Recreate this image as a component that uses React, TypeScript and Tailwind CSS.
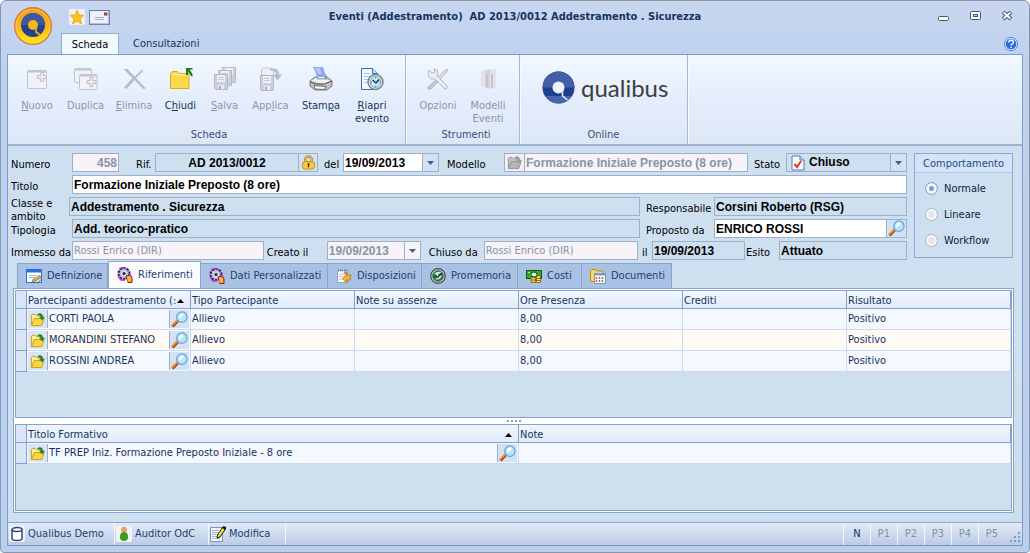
import React, { useState } from 'react'
import clsx from 'clsx'

interface IconProps {
  muted?: boolean
}

const inputBase = 'h-[19px] min-w-0 border border-[#9db0cb] px-px outline-none'
const boldText = "font-['Liberation_Sans',sans-serif] text-[12px] font-bold"
const readOnlyField = 'bg-[#cedff0] text-black'
const disabledField = 'bg-[#f7f3f8] text-[#8795a3]'

/* ---------- Icons ---------- */

const Orb = () => (
  <svg viewBox="0 0 38 38" className="h-[38px] w-[38px]">
    <defs>
      <linearGradient id="orb" x1="0" y1="0" x2="0" y2="1">
        <stop offset="0" stopColor="#f39a1c" />
        <stop offset="0.55" stopColor="#fbb913" />
        <stop offset="1" stopColor="#ffe81e" />
      </linearGradient>
    </defs>
    <circle cx="19" cy="19" r="18.4" fill="url(#orb)" stroke="#d9773c" strokeWidth="1.2" />
    <circle cx="19" cy="19" r="16.6" fill="none" stroke="#ffd75a" strokeWidth="0.8" />
    <circle cx="19" cy="18" r="12" fill="#24408f" />
    <path d="M7 18a12 12 0 0 1 24 0z" fill="#3c5aa4" />
    <circle cx="19" cy="18" r="5" fill="#fbb714" />
    <path d="M22 20v5l4 3" fill="none" stroke="#fbb714" strokeWidth="1.6" />
  </svg>
)

const StarIcon = () => (
  <svg viewBox="0 0 16 16" className="h-4 w-4">
    <rect width="16" height="16" rx="2" fill="#f3f1f1" />
    <path d="M8 1l2 4.900 5 .4-3.800 3.400L12.500 15 8 12.100 3.500 15l1.300-5.300L1 6.300l5-.4z" fill="#fcc419" stroke="#e59a10" strokeWidth="0.7" />
  </svg>
)

const MailIcon = () => (
  <svg viewBox="0 0 21 15" className="h-[15px] w-[21px]">
    <rect x="0.5" y="0.5" width="20" height="14" fill="#eef0fb" stroke="#6379b8" />
    <path d="M1 14h19V1" fill="none" stroke="#8190b8" />
    <path d="M6 7.500h9M6 9.500h9" stroke="#a9afc0" />
    <rect x="15" y="2.5" width="3.5" height="3" fill="#a0443c" />
  </svg>
)

const NewIcon = () => (
  <svg viewBox="0 0 24 24" className="h-6 w-6">
    <rect x="2.5" y="3.5" width="19" height="18" rx="1" fill="#f1f1f9" stroke="#c3c4d1" />
    <path d="M3 4.500h18" stroke="#c4c5d2" strokeWidth="2" />
    <path d="M15.500 5.500h3v3h3v3h-3v3h-3v-3h-3v-3h3z" fill="#e9eaf2" stroke="#bdbecc" />
  </svg>
)

const DuplicateIcon = () => (
  <svg viewBox="0 0 24 24" className="h-6 w-6">
    <rect x="0.5" y="1.5" width="17" height="14" rx="1" fill="#f1f1f9" stroke="#c3c4d1" />
    <path d="M1 2.500h16" stroke="#c4c5d2" strokeWidth="2" />
    <rect x="5.5" y="7.5" width="17.5" height="15" rx="1" fill="#f1f1f9" stroke="#c3c4d1" />
    <path d="M6 8.500h17" stroke="#c4c5d2" strokeWidth="2" />
    <path d="M16 10.500h3v3h3v3h-3v3h-3v-3h-3v-3h3z" fill="#e9eaf2" stroke="#bdbecc" />
  </svg>
)

const DeleteIcon = () => (
  <svg viewBox="0 0 24 24" className="h-6 w-6">
    <path d="M1.500 2l4 0 7 7.500L20 3l1.500 .5-7.500 7.500L23.500 21l-1.500 1.500-9.500-9.500-8 9-2.500-1.500 8.500-9.500z" fill="#b9bac7" />
  </svg>
)

const CloseFolderIcon = () => (
  <svg viewBox="0 0 24 24" className="h-6 w-6">
    <path d="M1.500 6.500l2-2h5l2 2h9.500v15h-18.500z" fill="#fbd94e" stroke="#d8a81c" />
    <path d="M2.500 7.500h16.500" stroke="#fff3a5" />
    <path d="M17 1h6.500v1.500h-3l3 4.500v2.500h-1l-3.500-5V8H17z" fill="#1c7d20" />
  </svg>
)

const Floppy = ({ x, y }: { x: number; y: number }) => (
  <g transform={`translate(${x} ${y})`}>
    <path d="M.5.5h13v15h-12l-1-1z" fill="#cdced9" stroke="#b7b8c6" />
    <rect x="3" y="1" width="8" height="7" fill="#efeff7" />
    <path d="M4 3.500h6M4 5.500h6" stroke="#c5c6d2" />
    <rect x="4" y="11" width="6" height="4" fill="#e9e9f2" />
    <rect x="5" y="12" width="2" height="3" fill="#a9aaba" />
  </g>
)

const SaveIcon = () => (
  <svg viewBox="0 0 24 24" className="h-6 w-6">
    <Floppy x={9} y={0} />
    <Floppy x={5} y={3} />
    <Floppy x={1} y={7} />
  </svg>
)

const ApplyIcon = () => (
  <svg viewBox="0 0 24 24" className="h-6 w-6">
    <path d="M2.500 8V3l2-2h8l2 3v5z" fill="#efeff7" stroke="#c3c4d0" />
    <Floppy x={1} y={8} />
    <path d="M11 1.500h5q4 1 4 6h3l-4.500 6-4.500-6h3q0-4-6-4z" fill="#bbbcc9" />
  </svg>
)

const PrintIcon = () => (
  <svg viewBox="0 0 24 24" className="h-6 w-6">
    <path d="M4 0h10q1 5 4 10H8Q7 5 4 0z" fill="#8fa5f2" />
    <path d="M6 1h5l2 6H9z" fill="#b9c6f8" />
    <path d="M1 14l5-4h2l1 2h8l-1-2h2l5 4v5l-5 4H6l-5-4z" fill="#bfc1c5" stroke="#75787c" />
    <path d="M2 14l5-3.500 2 2h8l5 1.500-7 3z" fill="#f2f2f2" />
    <path d="M5 18.500l12 1-2 3-9-.5z" fill="#fafafa" stroke="#6c6e72" />
    <path d="M1 15l6 2h8l8-3" fill="none" stroke="#484b50" />
  </svg>
)

const ReopenIcon = () => (
  <svg viewBox="0 0 24 24" className="h-6 w-6">
    <path d="M1.500 1.500h11l5 5v16h-16z" fill="#f5f9ff" stroke="#2a70cd" />
    <path d="M12.500 1.500v5h5" fill="#cfe1fa" stroke="#2a70cd" />
    <path d="M4 6.500h6M4 9.500h7M4 12.500h4M4 15.500h3" stroke="#9ec3f3" />
    <circle cx="15.500" cy="15" r="7.500" fill="#d9e2eb" stroke="#7b8794" strokeWidth="1.5" />
    <circle cx="15.500" cy="15" r="5.300" fill="#c4ebfb" stroke="#78aed2" />
    <path d="M12.500 13l3.500 3 3-3.500" fill="none" stroke="#17365f" strokeWidth="1.5" />
    <path d="M15 10.500h1M15 19.500h1M11 15.500h1M19.500 15.500h1" stroke="#e8612c" strokeWidth="1.5" />
  </svg>
)

const OptionsIcon = () => (
  <svg viewBox="0 0 24 24" className="h-6 w-6">
    <path d="M3 3l3 3 3-1-1-3q4 0 4 4l-1 3 10 10q1 3-2 3L9 12l-4 0q-4-3-2-9z" fill="#ececf4" stroke="#b7b8c5" />
    <path d="M21 2l1 1-3 4-5 5-2-2 5-5z" fill="#dcdde6" stroke="#bcbdc9" />
    <path d="M10 13l2 2-7 7-3 0 0-2z" fill="#c6c7d2" stroke="#b3b4c1" />
  </svg>
)

const ModelsIcon = () => (
  <svg viewBox="0 0 24 24" className="h-6 w-6">
    <path d="M5 5l4-2v18l-4-3z" fill="#e1e2ec" />
    <path d="M9 4l4-2 1 1v19l-5-2z" fill="#d3d4df" />
    <path d="M14 2h6v19l-6 1z" fill="#e1e2ec" />
    <path d="M10 8l2-1v14l-2-1zM15 7h2v14h-2z" fill="#c3c4d0" />
  </svg>
)

const QualibusMark = () => (
  <svg viewBox="0 0 33 33" className="h-[33px] w-[33px]">
    <circle cx="16.500" cy="16.500" r="16" fill="#1d3d8f" />
    <path d="M.5 16.500a16 16 0 0 1 32 0z" fill="#425ea5" />
    <path d="M3 25a16 16 0 0 0 27 0z" fill="#4766ab" />
    <circle cx="16.500" cy="16.500" r="6" fill="#edf2fd" />
    <path d="M20.500 19v6l5 4" fill="none" stroke="#edf2fd" strokeWidth="1.5" />
  </svg>
)

const HelpIcon = () => (
  <svg viewBox="0 0 14 14" className="h-[14px] w-[14px]">
    <circle cx="7" cy="7" r="6.500" fill="#fff" stroke="#3f78dc" />
    <circle cx="7" cy="7" r="5.300" fill="#2e6adb" />
    <path d="M4.800 5.500q0-2.300 2.300-2.300t2.300 2q0 1.300-1.400 1.900-.9.400-.9 1.300M7 9.800v1.200" fill="none" stroke="#fff" strokeWidth="1.4" />
  </svg>
)

const LockIcon = () => (
  <svg viewBox="0 0 16 16" className="h-[15px] w-[15px]">
    <path d="M4.500 8V5a3.500 3.500 0 0 1 7 0v3" fill="none" stroke="#a87c1e" strokeWidth="2.6" />
    <path d="M4.500 8V5a3.500 3.500 0 0 1 7 0v3" fill="none" stroke="#fbe08a" strokeWidth="1" />
    <rect x="1.5" y="7" width="13" height="8" rx="3" fill="#fbc93d" stroke="#c08a1c" />
    <path d="M8 9v4M7 9.500h2" stroke="#33260a" strokeWidth="1.3" />
  </svg>
)

const FolderIcon = ({ muted }: IconProps) => (
  <svg viewBox="0 0 16 16" className="h-[15px] w-[15px]">
    <path d="M1.500 14V3.500l1-1h3l1.500 1.500h5v3" fill={muted ? '#c4c5c8' : '#fdf0a0'} stroke={muted ? '#8f9296' : '#c79a16'} />
    <path d="M1.500 14.500l3-7.500h10.500l-2.500 7.500z" fill={muted ? '#b2b4b7' : '#fbd63f'} stroke={muted ? '#8f9296' : '#c79a16'} />
    <path d="M8 2q5-2 6 3h2l-3 4-3.500-4h2Q11 3 8 3.500z" fill={muted ? '#9a9ca0' : '#23852a'} />
  </svg>
)

const MagnifierIcon = () => (
  <svg viewBox="0 0 18 18" className="h-[17px] w-[17px]">
    <path d="M7.500 10l-6 6.500" stroke="#8f3d12" strokeWidth="3.2" />
    <path d="M7 9.800l-6 6" stroke="#f58c25" strokeWidth="2" />
    <circle cx="11.500" cy="6.500" r="5.500" fill="#b3e6fc" stroke="#6f9fd6" strokeWidth="1.3" />
    <path d="M8 5.500q1.500-3 4.500-3l1 2-4 4z" fill="#f2fcff" />
  </svg>
)

const CheckDocIcon = () => (
  <svg viewBox="0 0 14 16" className="h-4 w-[14px]">
    <path d="M1 1h8l4 4v10H1z" fill="#f5faff" stroke="#5580ad" />
    <path d="M9 1v4h4" fill="#bcd9f5" stroke="#5580ad" />
    <path d="M3.500 9l2.500 3 4-6" fill="none" stroke="#ea3a1f" strokeWidth="2" />
  </svg>
)

const DownArrow = () => (
  <svg viewBox="0 0 7 4" className="h-1 w-[7px]">
    <path d="M0 0h7L3.500 4z" fill="#455f85" />
  </svg>
)

const FormIcon = () => (
  <svg viewBox="0 0 16 16" className="h-4 w-4">
    <rect x="0.5" y="1.5" width="15" height="13" fill="#fff" stroke="#2f6fd0" />
    <path d="M1 3h14" stroke="#2b70dd" strokeWidth="3" />
    <path d="M3 7.500h9M3 9.500h6" stroke="#a8bddb" />
    <path d="M6 14l1-2.500 7-4 1.500 2L9 13.500z" fill="#f5a53f" stroke="#7c6a58" strokeWidth="0.7" />
    <path d="M12 14l4-3" stroke="#2f6fd0" />
  </svg>
)

const WheelIcon = () => (
  <svg viewBox="0 0 16 16" className="h-4 w-4">
    <circle cx="7" cy="6.500" r="5.500" fill="#cfd5e6" stroke="#28284e" strokeWidth="2" strokeDasharray="2.500 1" />
    <circle cx="7" cy="6.500" r="4" fill="none" stroke="#7d86b4" strokeDasharray="1 1" />
    <circle cx="7" cy="6.500" r="1.500" fill="#26264c" />
    <path d="M1 9l3 4 4 0M2 2l3-1.500h4" fill="none" stroke="#d11be0" strokeWidth="1.3" />
    <path d="M9 9l4-1 2 3v4.500h-4z" fill="#f59d23" stroke="#8a1d1d" />
    <path d="M11 9.500v5M13 9.500v5" stroke="#fbdc3d" />
    <path d="M12 7l3 3" stroke="#d11be0" strokeWidth="1.2" />
  </svg>
)

const NoteArrowIcon = () => (
  <svg viewBox="0 0 16 16" className="h-4 w-4">
    <path d="M1.500 2.500h10v12h-10z" fill="#fff" stroke="#8fa3c8" />
    <path d="M2 2.500h9" stroke="#5c7fb5" strokeWidth="2" strokeDasharray="1 1" />
    <path d="M3 6h6M3 8.500h4M3 11h4" stroke="#a8bddb" />
    <path d="M8 4h2.500v3h4.500l-1 5-3.500 0v3L6.500 10.500 10 7z" fill="#f7b32b" stroke="#b97611" strokeWidth="0.8" />
  </svg>
)

const ReminderIcon = () => (
  <svg viewBox="0 0 16 16" className="h-4 w-4">
    <circle cx="8" cy="8" r="7.300" fill="#c9d3d0" stroke="#3d4d4a" strokeWidth="1.2" />
    <circle cx="8" cy="8" r="5.300" fill="#1f6e41" stroke="#526b62" />
    <path d="M4 6q4-4 8-1-4 0-4 3 3-1 4 0-3 5-7 3 3-1 2-4z" fill="#d2f3e0" />
    <path d="M6 8l2 1.500 4-5" fill="none" stroke="#123a24" strokeWidth="1.2" />
  </svg>
)

const MoneyIcon = () => (
  <svg viewBox="0 0 16 16" className="h-4 w-4">
    <rect x="0.5" y="2.5" width="15" height="8" fill="#2faa35" stroke="#0e5614" />
    <ellipse cx="8" cy="6.500" rx="3" ry="2.500" fill="#d7f5c4" stroke="#0e5614" />
    <path d="M2 4.500h2M12 8.500h2" stroke="#b9ec9d" />
    <path d="M5 9.500h4.500v5H5z" fill="#f5d94b" stroke="#8a6d12" />
    <path d="M10.500 8h4v6.500h-4z" fill="#fbe873" stroke="#8a6d12" />
    <path d="M5 12h4.500M10.500 10.500h4M10.500 12.500h4" stroke="#8a6d12" />
  </svg>
)

const DocumentsIcon = () => (
  <svg viewBox="0 0 16 16" className="h-4 w-4">
    <path d="M.5 13.500v-11l1-1h4l1.500 1.500h6v10.500z" fill="#fbd765" stroke="#bd8b17" />
    <rect x="4.500" y="5.500" width="11" height="10" fill="#fff" stroke="#7f95b5" />
    <path d="M5 6.500h10" stroke="#6a9be0" strokeWidth="2" />
    <path d="M6.500 9v5M9.500 9v5" stroke="#e0513f" strokeWidth="1.5" strokeDasharray="2 1" />
    <path d="M12.500 9v5" stroke="#3aa54a" strokeWidth="1.5" strokeDasharray="2 1" />
  </svg>
)

const DatabaseIcon = () => (
  <svg viewBox="0 0 16 16" className="h-4 w-4">
    <rect width="16" height="16" rx="2" fill="#f5f5f9" />
    <path d="M3 3.500v9q0 2 5 2t5-2v-9" fill="#fff" stroke="#2c3f74" strokeWidth="1.4" />
    <ellipse cx="8" cy="3.500" rx="5" ry="2" fill="#fff" stroke="#2c3f74" strokeWidth="1.4" />
  </svg>
)

const UserIcon = () => (
  <svg viewBox="0 0 16 16" className="h-4 w-4">
    <rect width="16" height="16" rx="2" fill="#f3f1f1" />
    <circle cx="8" cy="3.800" r="3" fill="#eda173" />
    <path d="M8 6q-4 0-4 5 0 4 4 4t4-4q0-5-4-5z" fill="#3f9a1e" />
  </svg>
)

const EditIcon = () => (
  <svg viewBox="0 0 16 16" className="h-4 w-4">
    <path d="M.5 1.500h12v14H.5z" fill="#f2f6fc" stroke="#7a94ba" />
    <path d="M2 4.500h7M2 6.500h6M2 8.500h5M2 10.500h5M2 12.500h8" stroke="#9db4d4" />
    <path d="M7 12l1-4 5-7h2.500v2l-5.500 8z" fill="#f1df2e" stroke="#1b1b12" />
    <path d="M13 1l2.500 2" stroke="#000" strokeWidth="2" />
  </svg>
)

/* ---------- Ribbon ---------- */

interface RibbonItem {
  label: React.ReactNode
  icon: React.ReactNode
  width: string
  disabled?: boolean
}

const mainCommands: RibbonItem[] = [
  { label: <><u>N</u>uovo</>, icon: <NewIcon />, width: 'w-12', disabled: true },
  { label: 'Duplica', icon: <DuplicateIcon />, width: 'w-[49px]', disabled: true },
  { label: <><u>E</u>limina</>, icon: <DeleteIcon />, width: 'w-12', disabled: true },
  { label: <>C<u>h</u>iudi</>, icon: <CloseFolderIcon />, width: 'w-[45px]' },
  { label: <><u>S</u>alva</>, icon: <SaveIcon />, width: 'w-[43px]', disabled: true },
  { label: <>App<u>l</u>ica</>, icon: <ApplyIcon />, width: 'w-[49px]', disabled: true },
  { label: <>Stam<u>p</u>a</>, icon: <PrintIcon />, width: 'w-[52px]' },
  { label: <><u>R</u>iapri<br />evento</>, icon: <ReopenIcon />, width: 'w-[50px]' }
]

const toolCommands: RibbonItem[] = [
  { label: 'Opzioni', icon: <OptionsIcon />, width: 'w-[50px]', disabled: true },
  { label: <>Modelli<br />Eventi</>, icon: <ModelsIcon />, width: 'w-[50px]', disabled: true }
]

const RibbonGroup: React.FC<{ title: string; className: string; children: React.ReactNode }> = ({
  title,
  className,
  children
}) => (
  <section
    className={clsx(
      'flex flex-col justify-between border-r border-[#a9b7d2] shadow-[1px_0_0_#f7faff]',
      className
    )}
  >
    <div className="flex pt-3">{children}</div>
    <h2 className="pb-px text-center text-[#33507c]">{title}</h2>
  </section>
)

const RibbonButton = ({ label, icon, width, disabled }: RibbonItem) => (
  <button
    type="button"
    disabled={disabled}
    className={clsx(
      'flex flex-col items-center gap-2 leading-[13px]',
      width,
      disabled ? 'text-[#8c98a8]' : 'text-[#15345e]'
    )}
  >
    {icon}
    <span>{label}</span>
  </button>
)

/* ---------- Form ---------- */

const Label: React.FC<{ htmlFor: string; className?: string; children: React.ReactNode }> = ({
  htmlFor,
  className,
  children
}) => (
  <label htmlFor={htmlFor} className={clsx('shrink-0 pt-1 leading-[15px] whitespace-nowrap text-black', className)}>
    {children}
  </label>
)

const SmallButton: React.FC<{ label: string; className?: string; disabled?: boolean; children: React.ReactNode }> = ({
  label,
  className,
  disabled,
  children
}) => (
  <button
    type="button"
    aria-label={label}
    disabled={disabled}
    className={clsx(
      'flex h-[19px] shrink-0 items-center justify-center border border-[#9db0cb]',
      className
    )}
  >
    {children}
  </button>
)

const EventForm = () => (
  <form className="flex min-w-0 flex-1 flex-col gap-[3px]">
    <div className="flex">
      <Label htmlFor="numero" className="w-[61px]">Numero</Label>
      <input id="numero" disabled defaultValue="458" className={clsx(inputBase, boldText, disabledField, 'w-[47px] text-right')} />
      <Label htmlFor="rif" className="w-9 pl-[17px]">Rif.</Label>
      <input id="rif" readOnly defaultValue="AD 2013/0012" className={clsx(inputBase, boldText, readOnlyField, 'w-36 text-center')} />
      <SmallButton label="Blocca" className="-ml-px w-5 bg-[#d3e1f4]"><LockIcon /></SmallButton>
      <Label htmlFor="del" className="w-[25px] pl-[6px]">del</Label>
      <input id="del" defaultValue="19/09/2013" className={clsx(inputBase, boldText, 'w-20 bg-white text-black')} />
      <SmallButton label="Apri calendario" className="-ml-px w-[17px] bg-[#d3e1f4]"><DownArrow /></SmallButton>
      <Label htmlFor="modello" className="w-[65px] pl-2">Modello</Label>
      <SmallButton label="Apri modello" disabled className="w-[21px] bg-[#f2f0f6]"><FolderIcon muted /></SmallButton>
      <input id="modello" disabled defaultValue="Formazione Iniziale Preposto (8 ore)" className={clsx(inputBase, boldText, disabledField, '-ml-px flex-1')} />
      <Label htmlFor="stato" className="w-[38px] pl-[6px]">Stato</Label>
      <div className="relative flex h-[19px] w-[121px] shrink-0 items-center border border-[#9db0cb] bg-[#cedff0] pl-1">
        <CheckDocIcon />
        <select id="stato" className={clsx(boldText, 'h-full flex-1 appearance-none pl-1 leading-[17px] text-black outline-none')}>
          <option>Chiuso</option>
        </select>
        <span className="pointer-events-none flex h-full w-4 items-center justify-center border-l border-[#9db0cb] bg-[#d3e1f4]">
          <DownArrow />
        </span>
      </div>
    </div>

    <div className="flex">
      <Label htmlFor="titolo" className="w-[61px]">Titolo</Label>
      <input id="titolo" defaultValue="Formazione Iniziale Preposto (8 ore)" className={clsx(inputBase, boldText, 'flex-1 bg-white text-black')} />
    </div>

    <div className="flex h-[19px]">
      <label htmlFor="classe" className="w-[58px] shrink-0 leading-[13px] text-black">Classe e ambito</label>
      <input id="classe" readOnly defaultValue="Addestramento . Sicurezza" className={clsx(inputBase, boldText, readOnlyField, 'flex-1')} />
      <Label htmlFor="responsabile" className="w-[74px] pl-[6px]">Responsabile</Label>
      <input id="responsabile" readOnly defaultValue="Corsini Roberto (RSG)" className={clsx(inputBase, boldText, readOnlyField, 'w-[193px]')} />
    </div>

    <div className="flex">
      <Label htmlFor="tipologia" className="w-[61px]">Tipologia</Label>
      <input id="tipologia" readOnly defaultValue="Add. teorico-pratico" className={clsx(inputBase, boldText, readOnlyField, 'flex-1')} />
      <Label htmlFor="proposto" className="w-[74px] pl-[6px]">Proposto da</Label>
      <input id="proposto" defaultValue="ENRICO ROSSI" className={clsx(inputBase, boldText, 'w-[173px] bg-white text-black')} />
      <SmallButton label="Cerca persona" className="-ml-px w-[21px] bg-[#d3e1f4]"><MagnifierIcon /></SmallButton>
    </div>

    <div className="flex">
      <Label htmlFor="immesso" className="w-[61px]">Immesso da</Label>
      <input id="immesso" disabled defaultValue="Rossi Enrico (DIR)" className={clsx(inputBase, disabledField, 'flex-[5]')} />
      <Label htmlFor="creato" className="w-[63px] pl-[3px]">Creato il</Label>
      <input id="creato" disabled defaultValue="19/09/2013" className={clsx(inputBase, boldText, disabledField, 'w-[78px]')} />
      <SmallButton label="Calendario creazione" disabled className="-ml-px w-[17px] bg-[#f7f3f8]"><DownArrow /></SmallButton>
      <Label htmlFor="chiuso" className="w-[63px] pl-2">Chiuso da</Label>
      <input id="chiuso" disabled defaultValue="Rossi Enrico (DIR)" className={clsx(inputBase, disabledField, 'flex-[4]')} />
      <Label htmlFor="chiuso-il" className="w-[14px] pl-1">il</Label>
      <input id="chiuso-il" readOnly defaultValue="19/09/2013" className={clsx(inputBase, boldText, readOnlyField, 'w-[93px]')} />
      <Label htmlFor="esito" className="w-[34px] pl-px">Esito</Label>
      <input id="esito" readOnly defaultValue="Attuato" className={clsx(inputBase, boldText, readOnlyField, 'w-32')} />
    </div>
  </form>
)

const BehaviourBox = () => {
  const [mode, setMode] = useState('Normale')

  return (
    <div
      role="radiogroup"
      aria-labelledby="comportamento"
      className="w-[99px] shrink-0 self-start border border-[#8da9cf]"
    >
      <div
        id="comportamento"
        className="h-[19px] border-b border-[#b5c9e8] bg-[#d5e3f8] pt-[2px] text-center leading-[15px] text-[#1f4a86]"
      >
        Comportamento
      </div>
      <div className="flex flex-col gap-[11px] pt-2 pb-[9px] pl-[10px]">
        {['Normale', 'Lineare', 'Workflow'].map(option => (
          <label key={option} className="flex items-center gap-[6px] leading-[15px] text-[#10233f]">
            <input
              type="radio"
              name="comportamento"
              checked={mode === option}
              onChange={() => setMode(option)}
              className="h-[13px] w-[13px] appearance-none rounded-full border border-[#a9b4c4] bg-[#e4e4ea] shadow-[inset_0_0_0_2px_#fafbfd] checked:border-[#8fa9cc] checked:bg-[#7f9fcb] checked:shadow-[inset_0_0_0_3px_#f4f8fd]"
            />
            {option}
          </label>
        ))}
      </div>
    </div>
  )
}

/* ---------- Tabs and grids ---------- */

const tabs = [
  { label: 'Definizione', icon: <FormIcon />, width: 'w-[91px]' },
  { label: 'Riferimenti', icon: <WheelIcon />, width: 'w-[93px]' },
  { label: 'Dati Personalizzati', icon: <WheelIcon />, width: 'w-[127px]' },
  { label: 'Disposizioni', icon: <NoteArrowIcon />, width: 'w-[94px]' },
  { label: 'Promemoria', icon: <ReminderIcon />, width: 'w-24' },
  { label: 'Costi', icon: <MoneyIcon />, width: 'w-16' },
  { label: 'Documenti', icon: <DocumentsIcon />, width: 'w-[90px]' }
]

const TabStrip = () => {
  const [active, setActive] = useState('Riferimenti')

  return (
    <div role="tablist" className="flex h-7 items-end pl-1">
      {tabs.map(tab => (
        <button
          key={tab.label}
          type="button"
          role="tab"
          aria-selected={active === tab.label}
          onClick={() => setActive(tab.label)}
          className={clsx(
            'flex shrink-0 items-center gap-[5px] border border-b-0 border-[#86a4cc] pl-2 whitespace-nowrap text-[#1d3f70]',
            tab.width,
            active === tab.label ? 'h-[27px] bg-[#fafcff]' : 'h-[25px] border-l-0 bg-[#a9c1e2] first:border-l'
          )}
        >
          {tab.icon}
          {tab.label}
        </button>
      ))}
    </div>
  )
}

const SortArrow = () => (
  <svg viewBox="0 0 7 4" className="mr-[5px] h-1 w-[7px] shrink-0">
    <path d="M0 4h7L3.500 0z" fill="#000" />
  </svg>
)

const headCell = 'h-[18px] border-r border-b border-[#86a1c6] bg-linear-to-b from-[#f1f6ff] to-[#e2ebfb] px-px pt-[2px] text-left leading-[15px] font-normal whitespace-nowrap'
const bodyCell = 'h-[21px] border-r border-b border-[#c5daf5] px-px pt-px'
const selectorCell = 'w-[11px] border-r border-b border-[#86a1c6] bg-[#d9e6f7]'

const LookupCell = ({ value }: { value: string }) => (
  <td className="h-[21px] border-r border-b border-[#c5daf5] px-px">
    <div className="flex items-center">
      <button type="button" aria-label={`Apri ${value}`} className="flex h-[18px] w-5 items-center justify-center border-r border-[#9db0cb] bg-[#d9e5f5]">
        <FolderIcon />
      </button>
      <span className="flex-1 pt-px pl-px">{value}</span>
      <button type="button" aria-label={`Cerca ${value}`} className="flex h-[18px] w-5 items-center justify-center border-l border-[#9db0cb] bg-[#d3e1f4]">
        <MagnifierIcon />
      </button>
    </div>
  </td>
)

const participants = ['CORTI PAOLA', 'MORANDINI STEFANO', 'ROSSINI ANDREA']

const ParticipantsGrid = () => (
  <table className="w-full table-fixed border-separate border-spacing-0">
    <colgroup>
      <col className="w-[11px]" />
      <col span={6} />
    </colgroup>
    <thead>
      <tr>
        <th className={selectorCell} aria-label="Selettore" />
        <th className={headCell}>
          <div className="flex items-center justify-between">
            <span>Partecipanti addestramento (:</span>
            <SortArrow />
          </div>
        </th>
        {['Tipo Partecipante', 'Note su assenze', 'Ore Presenza', 'Crediti', 'Risultato'].map(title => (
          <th key={title} className={headCell}>{title}</th>
        ))}
      </tr>
    </thead>
    <tbody>
      {participants.map(name => (
        <tr key={name} className="bg-[#f6f8ff] even:bg-[#fffaf4]">
          <td className={selectorCell} />
          <LookupCell value={name} />
          <td className={bodyCell}>Allievo</td>
          <td className={bodyCell} />
          <td className={bodyCell}>8,00</td>
          <td className={bodyCell} />
          <td className={bodyCell}>Positivo</td>
        </tr>
      ))}
    </tbody>
  </table>
)

const TitlesGrid = () => (
  <table className="w-full table-fixed border-separate border-spacing-0">
    <colgroup>
      <col className="w-[11px]" />
      <col span={2} />
    </colgroup>
    <thead>
      <tr>
        <th className={selectorCell} aria-label="Selettore" />
        <th className={headCell}>
          <div className="flex items-center justify-between">
            Titolo Formativo
            <SortArrow />
          </div>
        </th>
        <th className={headCell}>Note</th>
      </tr>
    </thead>
    <tbody>
      <tr className="bg-[#f6f8ff]">
        <td className={selectorCell} />
        <LookupCell value="TF PREP Iniz. Formazione Preposto Iniziale - 8 ore" />
        <td className={bodyCell} />
      </tr>
    </tbody>
  </table>
)

/* ---------- Status bar ---------- */

const statusItems = [
  { label: 'Qualibus Demo', icon: <DatabaseIcon />, width: 'w-[107px]' },
  { label: 'Auditor OdC', icon: <UserIcon />, width: 'w-[94px]' },
  { label: 'Modifica', icon: <EditIcon />, width: 'w-[77px]' }
]

const StatusBar = () => (
  <footer className="flex h-6 items-stretch border-y border-t-[#8ba7cf] border-b-[#7692bd] bg-linear-to-b from-[#e3ebf8] to-[#b9cbe4] text-[#1d3f70]">
    {statusItems.map(item => (
      <div key={item.label} className={clsx('flex items-center gap-[3px] border-r border-[#f3f7fd] pl-px', item.width)}>
        {item.icon}
        {item.label}
      </div>
    ))}
    <div className="flex-1" />
    {['N', 'P1', 'P2', 'P3', 'P4', 'P5'].map(page => (
      <div
        key={page}
        className={clsx(
          'flex w-[27px] items-center justify-center border-l border-[#f3f7fd]',
          page === 'N' ? 'text-[#12315c]' : 'text-[#8590a0]'
        )}
      >
        {page}
      </div>
    ))}
    <div className="flex w-[17px] items-end justify-end p-[2px]">
      <svg viewBox="0 0 11 11" className="h-[11px] w-[11px]" fill="#7f9cc7">
        <path d="M9 0h2v2H9zM5 4h2v2H5zM9 4h2v2H9zM1 8h2v2H1zM5 8h2v2H5zM9 8h2v2H9z" />
      </svg>
    </div>
  </footer>
)

/* ---------- Window ---------- */

const TitleBar = () => (
  <header className="relative">
    <button type="button" aria-label="Menu" className="absolute top-[6px] left-[7px]">
      <Orb />
    </button>
    <div className="grid h-8 grid-cols-[1fr_auto_1fr] items-center">
      <div className="flex items-center gap-1 pl-[62px]">
        <button type="button" aria-label="Preferiti"><StarIcon /></button>
        <button type="button" aria-label="Messaggi"><MailIcon /></button>
      </div>
      <h1 className="font-bold whitespace-pre text-[#15345e]">
        Eventi (Addestramento)  AD 2013/0012 Addestramento . Sicurezza
      </h1>
      <div className="flex items-center justify-end gap-5 pr-[9px]">
        <button type="button" aria-label="Riduci">
          <svg viewBox="0 0 12 12" className="h-3 w-3">
            <rect x="0.5" y="5.5" width="10" height="4" rx="1" fill="#fff" stroke="#4a5568" />
          </svg>
        </button>
        <button type="button" aria-label="Ingrandisci">
          <svg viewBox="0 0 12 12" className="h-3 w-3">
            <rect x="0.5" y="0.5" width="10" height="8" rx="1" fill="#fff" stroke="#4a5568" />
            <rect x="3.5" y="3.5" width="4" height="2" fill="#c3d5ee" stroke="#4a5568" />
          </svg>
        </button>
        <button type="button" aria-label="Chiudi finestra">
          <svg viewBox="0 0 12 12" className="h-3 w-3">
            <path d="M1 1l8 7M9 1L1 8" stroke="#4a5568" strokeWidth="4" />
            <path d="M1.500 1.500l7 6M8.500 1.500l-7 6" stroke="#fff" strokeWidth="2" />
          </svg>
        </button>
      </div>
    </div>
    <div className="flex h-[21px] items-end justify-between pr-[5px] pl-[54px]">
      <nav className="flex h-full" role="tablist">
        <button
          type="button"
          role="tab"
          aria-selected="true"
          className="w-[58px] border border-b-0 border-[#8eaed8] bg-[#f1f9ff] pt-[2px] text-black"
        >
          Scheda
        </button>
        <button type="button" role="tab" aria-selected="false" className="px-[14px] pt-[2px] text-[#15345e]">
          Consultazioni
        </button>
      </nav>
      <button type="button" aria-label="Guida" className="self-center"><HelpIcon /></button>
    </div>
  </header>
)

export default function App() {
  return (
    <div className="flex min-h-screen flex-col rounded-t-md rounded-b-sm border border-[#8d97ab] bg-linear-to-b from-[#c9d6f0] via-[#bdd2ef] via-[60px] to-[#b9cff0] px-[6px] pb-[6px] font-['DejaVu_Sans_Condensed','DejaVu_Sans',sans-serif] text-[11px] text-[#15345e]">
      <TitleBar />

      <main className="flex flex-1 flex-col border border-b-0 border-[#7f9dc8] bg-[#cedff0]">
        <div className="flex h-[91px] border-b-2 border-[#a3b1d3] bg-linear-to-b from-[#f0f9ff] via-[#e6eefd] via-[45%] to-[#dce7f6]">
          <RibbonGroup title="Scheda" className="w-[398px] pl-[5px]">
            {mainCommands.map((item, i) => <RibbonButton key={i} {...item} />)}
          </RibbonGroup>
          <RibbonGroup title="Strumenti" className="w-[114px] pl-[7px]">
            {toolCommands.map((item, i) => <RibbonButton key={i} {...item} />)}
          </RibbonGroup>
          <RibbonGroup title="Online" className="w-[168px]">
            <a href="#qualibus" className="flex items-center gap-[6px] pt-1 pl-[22px]">
              <QualibusMark />
              <span className="font-['Lato',sans-serif] text-[24px] leading-[30px] text-[#3c3f41]">qualibus</span>
            </a>
          </RibbonGroup>
        </div>

        <div className="flex gap-[7px] pt-[7px] pr-[9px] pl-[3px]">
          <EventForm />
          <BehaviourBox />
        </div>

        <div className="flex flex-1 flex-col pr-2 pb-[9px] pl-[5px]">
          <TabStrip />
          <div className="flex flex-1 flex-col border border-[#86a4cc] bg-white p-px">
            <section className="min-h-32 border border-[#86a4cc] bg-[#cedff0]">
              <ParticipantsGrid />
            </section>
            <div className="flex h-[6px] items-center justify-center gap-[2px]">
              {[0, 1, 2, 3].map(dot => <span key={dot} className="h-[2px] w-[2px] bg-[#86a1c6]" />)}
            </div>
            <section className="flex-1 border border-[#86a4cc] bg-[#cedff0]">
              <TitlesGrid />
            </section>
          </div>
        </div>

        <StatusBar />
      </main>
    </div>
  )
}
